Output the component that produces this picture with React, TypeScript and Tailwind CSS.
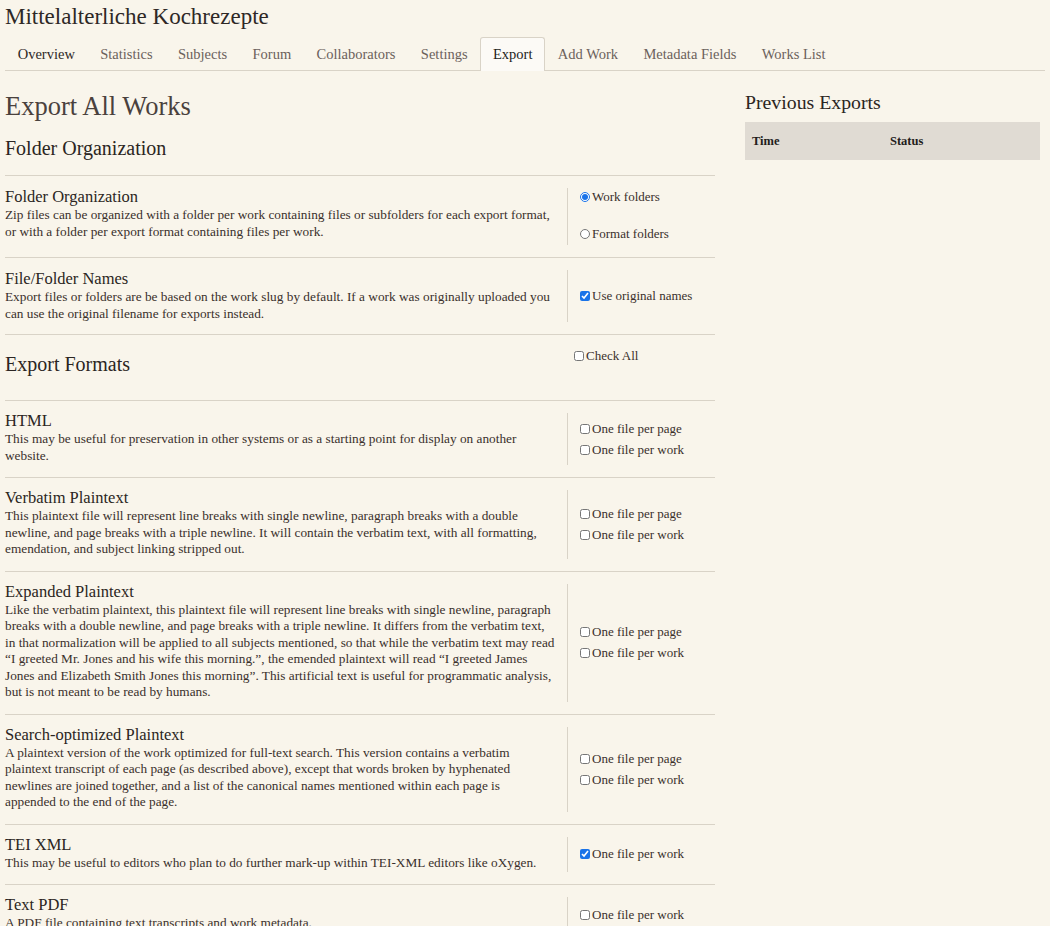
import React from "react";

const serif = { fontFamily: '"Liberation Serif", "Times New Roman", serif' };

type Opt = { label: string; checked?: boolean };
type Row = { title: string; desc: string; opts: Opt[]; narrow?: boolean };

const tabs = ["Overview", "Statistics", "Subjects", "Forum", "Collaborators", "Settings", "Export", "Add Work", "Metadata Fields", "Works List"];

function Box({ checked, type }: { checked?: boolean; type: "radio" | "checkbox" }) {
  return (
    <input
      type={type}
      defaultChecked={checked}
      name={type === "radio" ? "org" : undefined}
      className="m-0 mr-[2px] h-[10px] w-[10px] shrink-0 accent-[#1a73e8]"
    />
  );
}

function Text({ title, desc, pad, narrow }: { title: string; desc: string; pad: string; narrow?: boolean }) {
  return (
    <div className={`w-[562px] shrink-0 pr-[10.5px] ${pad}`}>
      <div className="text-[16.5px] leading-[20px] text-[#2b2522]">{title}</div>
      <div className={`text-[13.3px] leading-[16.5px] text-[#3a302b] ${narrow ? "max-w-[540px]" : ""}`}>{desc}</div>
    </div>
  );
}

function FormRow({ row, last, pad = "pt-[10px] pb-[13px]" }: { row: Row; last?: boolean; pad?: string }) {
  return (
    <div className={`flex ${last ? "" : "border-b border-[#d9d3c7]"}`}>
      <Text title={row.title} desc={row.desc} pad={pad} narrow={row.narrow} />
      <div className="my-[12px] flex flex-1 flex-col justify-center gap-[5px] border-l border-[#d9d3c7] pl-[12px]">
        {row.opts.map((o) => (
          <label key={o.label} className="flex items-center text-[13px] leading-[16px] text-[#3a302b]">
            <Box checked={o.checked} type="checkbox" />
            {o.label}
          </label>
        ))}
      </div>
    </div>
  );
}

const both: Opt[] = [{ label: "One file per page" }, { label: "One file per work" }];

const formats: Row[] = [
  { title: "HTML", desc: "This may be useful for preservation in other systems or as a starting point for display on another website.", opts: both },
  { title: "Verbatim Plaintext", desc: "This plaintext file will represent line breaks with single newline, paragraph breaks with a double newline, and page breaks with a triple newline. It will contain the verbatim text, with all formatting, emendation, and subject linking stripped out.", opts: both },
  { title: "Expanded Plaintext", desc: "Like the verbatim plaintext, this plaintext file will represent line breaks with single newline, paragraph breaks with a double newline, and page breaks with a triple newline. It differs from the verbatim text, in that normalization will be applied to all subjects mentioned, so that while the verbatim text may read \u201cI greeted Mr. Jones and his wife this morning.\u201d, the emended plaintext will read \u201cI greeted James Jones and Elizabeth Smith Jones this morning\u201d. This artificial text is useful for programmatic analysis, but is not meant to be read by humans.", opts: both },
  { title: "Search-optimized Plaintext", narrow: true, desc: "A plaintext version of the work optimized for full-text search. This version contains a verbatim plaintext transcript of each page (as described above), except that words broken by hyphenated newlines are joined together, and a list of the canonical names mentioned within each page is appended to the end of the page.", opts: both },
  { title: "TEI XML", desc: "This may be useful to editors who plan to do further mark-up within TEI-XML editors like oXygen.", opts: [{ label: "One file per work", checked: true }] },
  { title: "Text PDF", desc: "A PDF file containing text transcripts and work metadata.", opts: [{ label: "One file per work" }] },
];

export default function App() {
  return (
    <div style={serif} className="min-h-[926px] bg-[#f9f5eb] text-[#2b2522]">
      <div className="px-[5px] pt-[3px]">
        <h1 className="text-[23px] leading-[28px] text-[#2e2826]">Mittelalterliche Kochrezepte</h1>
        <nav className="mt-[6px] flex border-b border-[#d9d3c7] pr-[5px]">
          {tabs.map((t) => (
            <div
              key={t}
              className={`-mb-px px-[11.7px] pb-[7px] pt-[7px] text-[14.5px] leading-[18px] ${
                t === "Export"
                  ? "rounded-t-[3px] border border-b-0 border-[#d9d3c7] bg-[#fcfaf6] text-[#231d1b]"
                  : t === "Overview"
                  ? "border border-transparent text-[#2e2826]"
                  : "border border-transparent text-[#6b615b]"
              }`}
            >
              {t}
            </div>
          ))}
        </nav>
      </div>
      <div className="flex px-[5px] pt-[19px]">
        <main className="w-[710px] shrink-0">
          <h2 className="text-[26.5px] leading-[32px] text-[#4a413d]">Export All Works</h2>
          <h3 className="mt-[14px] border-b border-[#d9d3c7] pb-[15px] text-[20px] leading-[24px] text-[#2b2522]">Folder Organization</h3>
          <div className="flex border-b border-[#d9d3c7]">
            <Text
              title="Folder Organization"
              desc="Zip files can be organized with a folder per work containing files or subfolders for each export format, or with a folder per export format containing files per work."
              pad="pt-[11px] pb-[17px]"
            />
            <div className="my-[12px] flex flex-1 flex-col justify-between border-l border-[#d9d3c7] pb-[3px] pt-[1px] pl-[12px]">
              <label className="flex items-center text-[13px] leading-[16px] text-[#3a302b]"><Box type="radio" checked />Work folders</label>
              <label className="flex items-center text-[13px] leading-[16px] text-[#3a302b]"><Box type="radio" />Format folders</label>
            </div>
          </div>
          <FormRow
            pad="pt-[11px] pb-[12px]"
            row={{ title: "File/Folder Names", desc: "Export files or folders are be based on the work slug by default. If a work was originally uploaded you can use the original filename for exports instead.", opts: [{ label: "Use original names", checked: true }] }}
          />
          <div className="flex border-b border-[#d9d3c7] pb-[24px] pt-[17px]">
            <div className="w-[569px] shrink-0 text-[20px] leading-[24px]">Export Formats</div>
            <label className="-mt-[4px] flex h-[16px] items-center text-[13px] leading-[16px] text-[#3a302b]"><Box type="checkbox" />Check All</label>
          </div>
          {formats.map((r, i) => (
            <FormRow key={r.title} row={r} last={i === formats.length - 1} />
          ))}
        </main>
        <aside className="ml-[30px] flex-1 pr-[5px]">
          <h2 className="text-[19.8px] leading-[24px] text-[#2b2522]">Previous Exports</h2>
          <div className="mt-[8px] flex h-[38px] items-center bg-[#e0dbd3] px-[7px] text-[12.5px] font-bold text-[#231d1b]">
            <div className="w-[138px]">Time</div>
            <div>Status</div>
          </div>
        </aside>
      </div>
    </div>
  );
}
